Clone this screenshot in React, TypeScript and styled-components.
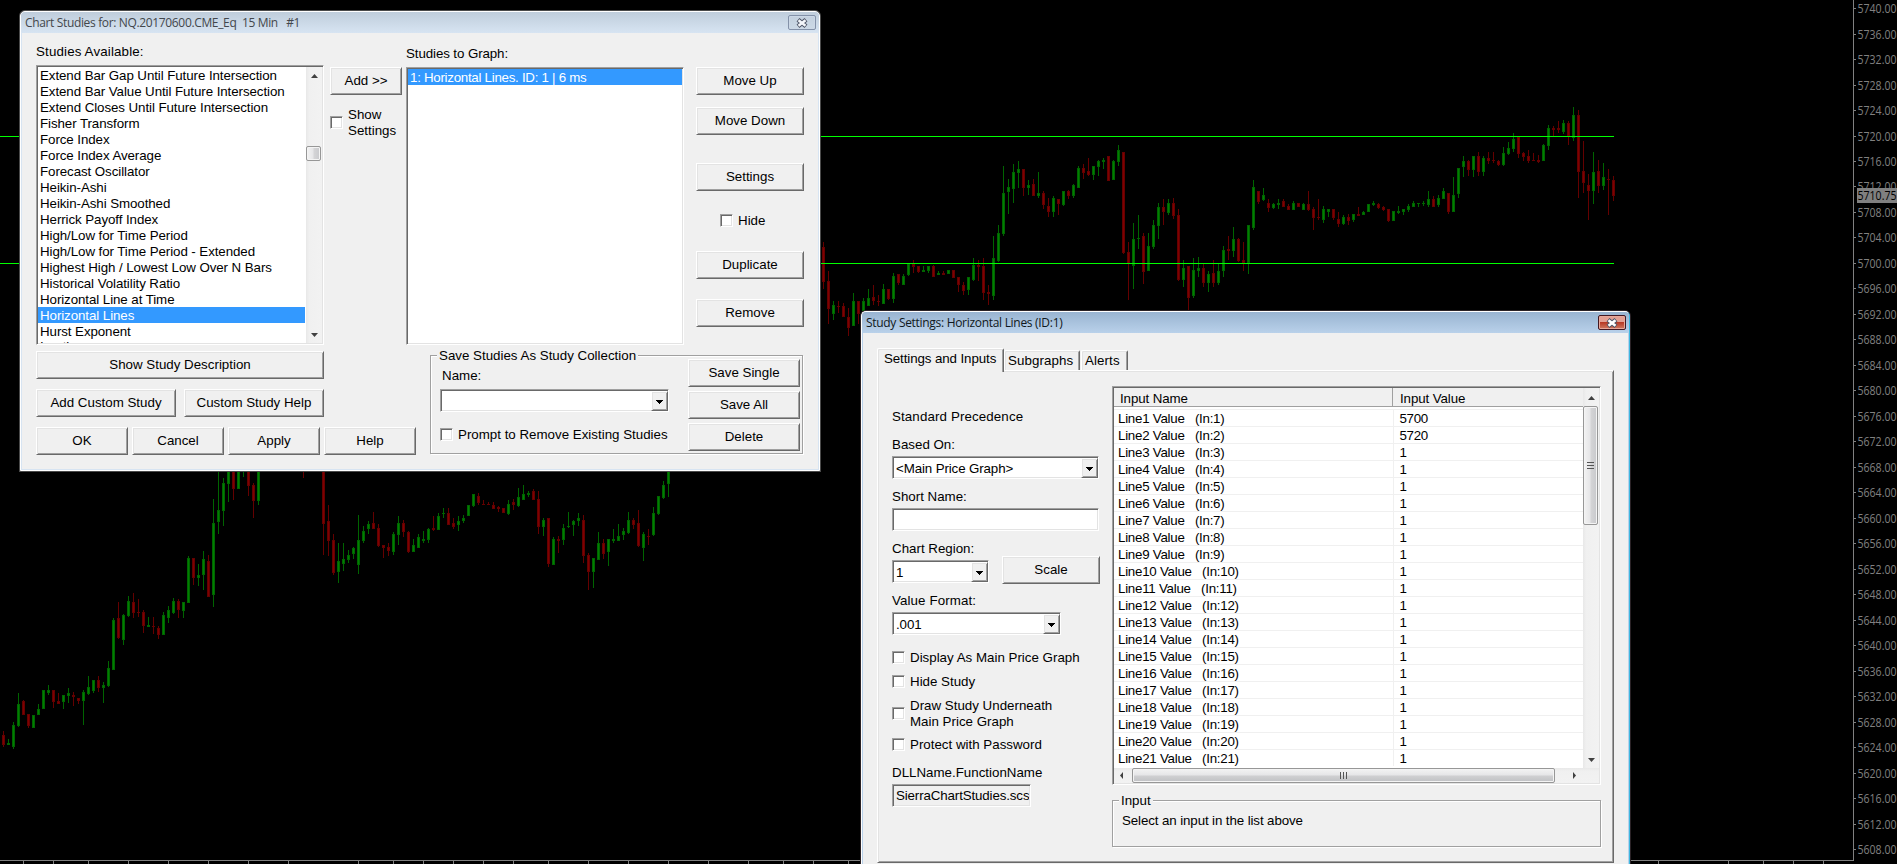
import React from "react";
import styled, { createGlobalStyle, css } from "styled-components";

const GlobalStyle = createGlobalStyle`
  body { margin: 0; background: #000; overflow: hidden; }
  * { box-sizing: border-box; }
`;

const raised = css`
  border: 1px solid;
  border-color: #fff #696969 #696969 #fff;
  box-shadow: inset 1px 1px 0 #e3e3e3, inset -1px -1px 0 #a0a0a0;
`;

const Desktop = styled.main`
  position: relative;
  width: 1897px;
  height: 864px;
  overflow: hidden;
  background: #000;
  color: #000;
  font: 13.33px/16px "Liberation Sans", Arial, sans-serif;
`;

const ChartSvg = styled.svg`
  display: block;
`;

const Window = styled.section<{ $x: number; $y: number; $w: number; $h: number; $active?: boolean }>`
  position: absolute;
  left: ${(p) => p.$x}px;
  top: ${(p) => p.$y}px;
  width: ${(p) => p.$w}px;
  height: ${(p) => p.$h}px;
  display: flex;
  flex-direction: column;
  background: #f0f0f0;
  border: 1px solid #fff;
  border-right-color: ${(p) => (p.$active ? "#3fb8e0" : "#fff")};
  border-radius: 5px 5px 0 0;
  box-shadow: 0 0 0 1px ${(p) => (p.$active ? "#2a2226" : "#4a4a4a")}, inset 0 0 0 1px ${(p) => (p.$active ? "#b9d1ea" : "#d7e4f2")};
`;

const TitleBar = styled.header<{ $active?: boolean }>`
  flex: none;
  height: 21px;
  padding: 3px 3px 0 4px;
  display: flex;
  justify-content: space-between;
  align-items: flex-start;
  border-radius: 4px 4px 0 0;
  background: ${(p) =>
    p.$active ? "linear-gradient(#99b4d1, #b9d1ea)" : "linear-gradient(#bfcddb, #d7e4f2)"};
  color: ${(p) => (p.$active ? "#101820" : "#43474c")};
`;

const Title = styled.span<{ $spacing: number }>`
  font: 12px/16px "Open Sans", "Noto Sans", sans-serif;
  letter-spacing: ${(p) => p.$spacing}px;
  white-space: pre;
`;

const CloseBox = styled.span<{ $active?: boolean }>`
  width: 28px;
  height: 15px;
  display: flex;
  align-items: center;
  justify-content: center;
  border-radius: 2px;
  border: 1px solid ${(p) => (p.$active ? "#431822" : "#8391a8")};
  box-shadow: inset 0 0 0 1px ${(p) => (p.$active ? "#e8a89a" : "#ccd8e6")};
  background: ${(p) =>
    p.$active ? "linear-gradient(#e3a094 0 45%, #b83a26 50%, #d07a62)" : "linear-gradient(#c3d0de, #ccd9e6)"};
`;

const Row = styled.div<{ $mt?: number; $gap?: number }>`
  display: flex;
  align-items: flex-start;
  margin-top: ${(p) => p.$mt ?? 0}px;
  gap: ${(p) => p.$gap ?? 0}px;
`;

const Column = styled.div<{ $w?: number; $ml?: number; $pt?: number }>`
  flex: none;
  display: flex;
  flex-direction: column;
  align-items: flex-start;
  width: ${(p) => (p.$w ? `${p.$w}px` : "auto")};
  margin-left: ${(p) => p.$ml ?? 0}px;
  padding-top: ${(p) => p.$pt ?? 0}px;
`;

const StudiesBody = styled.div`
  padding-left: 15px;
`;

const Label = styled.div<{ $mt?: number; $ml?: number; $ls?: number }>`
  height: 16px;
  margin: ${(p) => p.$mt ?? 0}px 0 0 ${(p) => p.$ml ?? 0}px;
  letter-spacing: ${(p) => p.$ls ?? 0}px;
  white-space: pre;
`;

const PushButton = styled.button<{ $w: number; $mt?: number }>`
  ${raised}
  flex: none;
  width: ${(p) => p.$w}px;
  height: 28px;
  margin: ${(p) => p.$mt ?? 0}px 0 0;
  padding: 0;
  background: #f0f0f0;
  color: #000;
  font: inherit;
  border-radius: 0;
`;

const Sunken = styled.div<{ $w: number; $h: number; $mt?: number; $gray?: boolean }>`
  flex: none;
  display: flex;
  width: ${(p) => p.$w}px;
  height: ${(p) => p.$h}px;
  margin-top: ${(p) => p.$mt ?? 0}px;
  padding: 1px;
  overflow: hidden;
  background: ${(p) => (p.$gray ? "#f0f0f0" : "#fff")};
  border: 1px solid;
  border-color: #a0a0a0 #fff #fff #a0a0a0;
  box-shadow: inset 1px 1px 0 #696969, inset -1px -1px 0 #e3e3e3;
`;

const FieldText = styled.span<{ $pt: number; $ls?: number }>`
  flex: 1;
  min-width: 0;
  padding: ${(p) => p.$pt}px 0 0 2px;
  letter-spacing: ${(p) => p.$ls ?? 0}px;
  overflow: hidden;
  white-space: nowrap;
`;

const DropButton = styled.span`
  ${raised}
  flex: none;
  width: 17px;
  height: 20px;
  margin-right: -1px;
  display: flex;
  align-items: center;
  justify-content: center;
  background: #f0f0f0;
`;

const CheckRow = styled.label<{ $mt?: number; $ml?: number }>`
  display: flex;
  align-items: center;
  gap: 5px;
  margin: ${(p) => p.$mt ?? 0}px 0 0 ${(p) => p.$ml ?? 0}px;
  white-space: pre;
`;

const CheckBox = styled.span`
  width: 13px;
  height: 13px;
  margin-bottom: 1px;
  background: #fff;
  border: 1px solid;
  border-color: #a0a0a0 #fff #fff #a0a0a0;
  box-shadow: inset 1px 1px 0 #696969, inset -1px -1px 0 #e3e3e3;
`;

const Items = styled.div<{ $ls: number }>`
  flex: 1;
  min-width: 0;
  overflow: hidden;
  letter-spacing: ${(p) => p.$ls}px;
`;

const Item = styled.div<{ $selected?: boolean }>`
  height: 16px;
  padding-left: 2px;
  line-height: 18px;
  white-space: pre;
  background: ${(p) => (p.$selected ? "#3399ff" : "transparent")};
  color: ${(p) => (p.$selected ? "#fff" : "#000")};

  &:nth-child(18) {
    line-height: 16px;
  }
`;

const VScroll = styled.div<{ $ml?: number }>`
  flex: none;
  width: 16px;
  margin-left: ${(p) => p.$ml ?? 0}px;
  display: flex;
  flex-direction: column;
  align-items: stretch;
  background: linear-gradient(90deg, #e8e8e8, #f0f0f0 20%, #f2f2f2);
`;

const HScroll = styled.div`
  flex: none;
  height: 15px;
  display: flex;
  background: linear-gradient(#e8e8e8, #f0f0f0 20%, #f2f2f2);
`;

const ArrowCell = styled.span<{ $w: number; $h: number }>`
  flex: none;
  width: ${(p) => p.$w}px;
  height: ${(p) => p.$h}px;
  display: flex;
  align-items: center;
  justify-content: center;
`;

const Thumb = styled.span<{ $w: number; $h: number; $mt?: number; $ml?: number; $flat?: boolean }>`
  flex: none;
  width: ${(p) => p.$w}px;
  height: ${(p) => p.$h}px;
  margin: ${(p) => p.$mt ?? 0}px 0 0 ${(p) => p.$ml ?? 0}px;
  display: flex;
  align-items: center;
  justify-content: center;
  border: 1px solid #979797;
  border-radius: 2px;
  box-shadow: inset 0 0 0 1px #f4f4f4;
  background: ${(p) =>
    p.$flat
      ? "linear-gradient(#f3f3f3, #e6e6e8 45%, #cfcfd1 55%, #c0c1c4)"
      : "linear-gradient(90deg, #f3f3f3, #e6e6e8 45%, #d4d4d6 55%, #c8c9cc)"};
`;

const Spacer = styled.span`
  flex: 1;
`;

const GroupBox = styled.div<{ $w: number; $h: number; $mt?: number; $ml?: number }>`
  position: relative;
  flex: none;
  display: flex;
  align-items: flex-start;
  width: ${(p) => p.$w}px;
  height: ${(p) => p.$h}px;
  margin: ${(p) => p.$mt ?? 0}px 0 0 ${(p) => p.$ml ?? 0}px;
  border: 1px solid #a0a0a0;
  box-shadow: 1px 1px 0 #fff, inset 1px 1px 0 #fff;
`;

const Legend = styled.span`
  position: absolute;
  left: 6px;
  top: -8px;
  padding: 0 2px;
  background: #f0f0f0;
  white-space: nowrap;
`;

const TabStrip = styled.div`
  display: flex;
  align-items: flex-end;
  height: 37px;
  padding-left: 15px;
`;

const Tab = styled.div<{ $w: number; $active?: boolean }>`
  position: relative;
  z-index: ${(p) => (p.$active ? 1 : 0)};
  width: ${(p) => p.$w}px;
  height: ${(p) => (p.$active ? 24 : 20)}px;
  margin: ${(p) => (p.$active ? "0 0 -2px 0" : "0 1px 0 0")};
  padding: ${(p) => (p.$active ? "2px 0 0 6px" : "2px 0 0 3px")};
  letter-spacing: ${(p) => (p.$active ? "-0.1px" : "0.1px")};
  background: #f0f0f0;
  white-space: nowrap;
  border: 1px solid;
  border-color: #fff #696969 transparent #fff;
  border-bottom: 0;
  box-shadow: inset 1px 1px 0 #e3e3e3, inset -1px 0 0 #a0a0a0;
  border-radius: 2px 2px 0 0;
`;

const TabPanel = styled.div`
  ${raised}
  display: flex;
  align-items: flex-start;
  width: 737px;
  height: 493px;
  margin-left: 15px;
  padding: 15px 0 0 14px;
`;

const Grid = styled.div`
  flex: 1;
  min-width: 0;
  display: flex;
  flex-direction: column;
`;

const GridHeader = styled.div`
  flex: none;
  display: flex;
  height: 19px;
  background: #f0f0f0;
  border-bottom: 1px solid #a0a0a0;
`;

const HeadCell = styled.div<{ $w: number; $pad: number; $split?: boolean }>`
  width: ${(p) => p.$w}px;
  padding: 3px 0 0 ${(p) => p.$pad}px;
  letter-spacing: -0.1px;
  border-right: ${(p) => (p.$split ? "1px solid #a0a0a0" : "0")};
`;

const GridRows = styled.div`
  flex: 1;
  min-height: 0;
  overflow: hidden;
  padding-top: 2px;
  letter-spacing: -0.26px;
`;

const GridRow = styled.div`
  display: flex;
  height: 17px;
  border-top: 1px solid #f0f0f0;
  white-space: pre;
`;

const Cell = styled.div<{ $w: number; $pad: number; $line?: boolean }>`
  width: ${(p) => p.$w}px;
  padding-left: ${(p) => p.$pad}px;
  line-height: 17px;
  border-right: ${(p) => (p.$line ? "1px solid #f0f0f0" : "0")};
`;

/* Candle rows: direction, high, body top, body bottom, low; in thirds of a pixel below the run's base line. */
type Run = { first: number; base: number; rows: string };

const runs: Run[] = [
  {
    first: 0,
    base: 465,
    rows: `r 798 810 840 846;g 822 834 840 840;g 771 780 846 852;g 684 717 783 786;r 705 708 750 750;r 747 747 783 789;g 750 750 789 789;g 717 732 750 750;g 675 675 732 732;g 660 675 684 690;r 675 675 711 729;r 684 708 717 717;g 690 690 711 732;g 669 684 693 714;r 681 690 696 723;r 699 699 708 717;g 675 681 708 780;g 633 666 687 690;g 645 645 678 684;r 633 645 669 681;g 651 660 669 714;g 588 609 663 666;g 459 465 615 615;r 411 459 519 522;g 447 450 525 540;g 393 408 453 456;r 384 411 444 459;r 402 441 444 456;r 435 441 483 504;g 456 480 486 486;r 456 483 486 507;r 483 489 510 522;g 441 450 510 510;g 423 435 459 474;g 399 408 444 447;r 402 408 435 459;g 411 411 438 459;g 273 279 414 414;r 279 279 339 360;g 297 330 339 363;g 258 282 330 375;r 270 288 396 396;g 102 174 390 426;g 0 135 171 207;g 39 54 138 183;g 0 0 57 111;r 0 0 72 105;g 0 0 72 72;g 0 0 15 36;r 0 0 63 93;r 54 60 108 159;g 0 0 108 120`,
  },
  { first: 60, base: 465, rows: `r 0 0 9 39` },
  {
    first: 64,
    base: 465,
    rows: `r 0 0 177 270;r 120 168 228 273;r 207 225 324 330;g 234 288 321 354;g 234 282 297 318;g 255 270 285 294;g 246 249 267 282;g 150 225 300 327;g 183 198 228 234;g 168 177 192 207;r 141 174 192 192;r 177 189 243 246;r 240 240 249 279;r 234 246 258 273;g 201 207 261 270;g 153 174 210 240;r 165 174 201 216;r 198 201 261 264;g 222 240 261 261;g 207 216 249 249;g 198 222 228 234;g 189 192 225 234;r 153 189 195 198;g 144 153 195 195;g 129 144 147 159;r 129 144 180 180;r 159 174 186 192;g 153 168 180 198;g 150 159 168 174;g 120 120 153 153;g 87 87 123 126;r 84 93 114 120;r 105 117 120 120;r 111 117 120 120;r 111 120 132 132;r 123 126 132 141;r 129 129 144 144;g 105 117 147 150;r 102 111 120 135;g 69 96 123 126;g 60 87 105 105;g 78 84 90 96;r 72 78 105 105;r 78 102 186 207;g 159 165 186 213;r 159 159 297 306;g 216 222 300 300;r 213 222 228 264;g 177 189 225 240;g 141 183 186 189;g 165 168 180 213;g 144 159 168 183;r 150 165 273 294;r 264 270 321 375;g 279 279 321 369;g 201 234 285 285;r 222 234 267 282;g 222 222 261 303;g 192 222 228 234;g 177 213 228 228;g 189 198 210 225;g 141 165 204 207;r 159 165 180 192;r 135 174 243 246;g 201 207 249 288;r 192 213 216 240;g 126 144 210 213;g 93 93 147 150;g 48 60 99 102;g 0 0 57 96`,
  },
  {
    first: 164,
    base: 90,
    rows: `r 456 471 576 597;r 543 573 657 702;g 633 645 672 690;r 633 648 651 669;r 639 648 681 681;r 654 681 714 738;g 609 633 708 708;r 633 633 672 702;g 624 633 663 663;g 597 624 648 648;r 585 621 633 645;r 615 633 636 648;g 582 597 642 642;r 597 597 627 630;g 549 558 627 639;r 552 552 579 585;g 552 558 585 585;g 522 522 555 558;r 510 522 531 549;r 528 528 546 549;g 528 540 546 546;g 528 528 543 549;r 525 528 561 561;g 543 549 555 555;r 543 549 555 555;g 540 540 552 552;r 540 540 564 564;r 561 561 585 606;r 576 585 603 615;g 561 561 600 615;g 504 525 570 573;r 510 525 531 573;r 504 528 609 630;r 585 606 612 645;g 438 504 618 630;g 405 429 513 516;g 228 309 432 438;g 267 291 306 372;g 222 246 297 339;g 213 237 249 294;r 237 237 294 318;g 270 285 294 315;r 267 282 318 318;g 246 309 318 324;r 303 309 345 357;r 324 348 366 381;g 318 324 366 381;r 327 327 342 375;g 303 303 345 348;r 300 303 318 327;g 282 285 318 324;g 228 234 294 294;r 222 234 249 267;r 204 243 255 258;g 228 228 255 270;g 210 213 231 258;g 204 210 216 237;r 198 198 273 273;g 210 213 270 270;g 165 180 216 228;r 186 186 489 492;r 456 486 522 630;g 399 447 528 597;g 375 444 447 477;r 429 438 546 582;g 429 468 543 543;g 390 405 471 477;g 339 351 408 447;r 327 351 366 405;g 327 339 369 375;r 324 339 378 387;r 357 375 570 573;g 510 534 570 591;r 528 528 624 660;g 504 540 618 624;g 501 534 543 561;r 522 534 579 591;g 543 552 579 606;r 510 549 579 591;g 522 543 579 585;g 468 480 543 561;r 438 477 483 510`,
  },
  {
    first: 246,
    base: 90,
    rows: `g 411 447 483 501;r 444 447 513 516;r 456 510 519 543;g 405 405 519 552;g 270 291 414 420;r 303 303 336 342;g 294 315 330 333;r 327 339 354 366;g 339 342 354 357;g 327 339 345 357;r 327 333 351 351;r 342 348 360 360;g 333 339 360 360;r 339 339 351 351;g 339 342 360 360;r 303 342 360 363;r 351 357 384 420;r 327 381 384 390;g 348 357 390 399;g 357 357 366 381;r 357 357 384 390;r 366 387 402 411;g 375 381 402 405;r 372 381 393 405;g 372 372 390 396;r 351 372 378 378;g 363 366 375 375;g 342 342 366 366;g 333 339 345 348;r 339 342 354 357;r 348 351 360 363;r 357 357 393 396;g 363 363 393 393;g 348 363 369 372;g 357 357 366 375;g 342 348 360 366;g 333 339 351 351;g 339 339 342 351;g 333 339 342 348;g 303 327 345 351;r 318 327 351 351;g 315 324 345 351;g 294 303 327 327;r 309 309 366 372;g 261 315 366 366;g 234 234 312 324;g 198 213 231 261;r 210 213 240 258;g 198 198 240 261;r 186 198 246 258;g 198 204 246 258;r 186 204 213 222;r 186 210 213 219;r 210 213 225 228;g 171 189 225 228;g 156 174 192 195;g 129 147 177 186;r 141 141 192 204;r 186 189 201 213;r 180 198 213 219;r 189 210 213 213;r 195 210 216 219;g 162 165 213 213;g 105 114 168 180;r 108 114 120 138;r 93 114 120 129;g 90 99 126 132;r 93 99 138 165;g 51 75 144 153;r 60 75 246 324;r 153 243 279 309;r 252 285 303 390;g 186 246 303 342;r 210 243 288 309;g 219 261 288 300;r 237 267 270 375;r 258 270 318 333`,
  },
];

const candles = runs.flatMap((run) =>
  run.rows.split(";").map((row, i) => {
    const [dir, ...v] = row.split(" ");
    const [high, top, bottom, low] = v.map((n) => run.base + Math.round(Number(n) / 3));
    return { x: 3 + (run.first + i) * 5, up: dir === "g", high, top, bottom, low };
  })
);

const timeTicks = [
  23, 53, 88, 128, 168, 208, 248, 288, 358, 393, 423, 453, 483, 513, 548, 588, 628, 668, 708, 748, 783, 813, 848,
  1658, 1728, 1763, 1793, 1823,
];
const prices = Array.from({ length: 34 }, (_, i) => 5740 - i * 4);
const priceY = (price: number) => Math.floor(136 + (5720 - price) * 6.372);

const AxisText = styled.text`
  font: 12px "Open Sans", "Noto Sans", sans-serif;
`;

const Chart = () => (
  <ChartSvg width="1897" height="864" shapeRendering="crispEdges">
    {candles.map((c) => (
      <g key={c.x} fill={c.up ? "#006400" : "#640000"}>
        <rect x={c.x} y={c.high} width="1" height={Math.max(1, c.low - c.high)} />
        <rect x={c.x - 1} y={c.top} width="3" height={Math.max(1, c.bottom - c.top)} />
        {c.bottom - c.top > 2 && (
          <rect x={c.x} y={c.top + 1} width="1" height={c.bottom - c.top - 2} fill={c.up ? "#008000" : "#800000"} />
        )}
      </g>
    ))}
    <rect x="0" y="136" width="1614" height="1" fill="#00ff00" />
    <rect x="0" y="263" width="1614" height="1" fill="#00ff00" />
    <g fill="#808080">
      <rect x="1853" y="0" width="1" height="861" />
      <rect x="0" y="860" width="1854" height="1" />
      {timeTicks.map((x) => (
        <rect key={x} x={x} y="861" width="1" height="3" />
      ))}
      {prices.map((p) => (
        <React.Fragment key={p}>
          <rect x="1854" y={priceY(p)} width="2" height="1" />
          <AxisText x="1857.5" y={priceY(p) + 5} textLength="39" lengthAdjust="spacingAndGlyphs">
            {p.toFixed(2)}
          </AxisText>
        </React.Fragment>
      ))}
      <rect x="1857" y="188" width="40" height="15" />
      <AxisText x="1857.5" y="200" fill="#000" textLength="39" lengthAdjust="spacingAndGlyphs">
        5710.75
      </AxisText>
    </g>
  </ChartSvg>
);

const CloseGlyph = ({ active }: { active?: boolean }) => (
  <svg width="14" height="10" viewBox="0 0 14 10">
    <path d="M3 1.8 L11 8.2 M11 1.8 L3 8.2" stroke="#4e5567" strokeWidth="4.6" />
    <path d="M3.5 2.2 L10.5 7.8 M10.5 2.2 L3.5 7.8" stroke={active ? "#fff" : "#f4f6fa"} strokeWidth="2.6" />
  </svg>
);

const Triangle = ({ dir }: { dir: "up" | "down" | "left" | "right" | "drop" }) => {
  const d = {
    up: "M0 6 L3.5 2 L7 6 Z",
    down: "M0 2 L7 2 L3.5 6 Z",
    left: "M5 0 L2 3.5 L5 7 Z",
    right: "M3 0 L6 3.5 L3 7 Z",
    drop: "M0 2 H7 V3 H6 V4 H5 V5 H4 V6 H3 V5 H2 V4 H1 V3 H0 Z",
  }[dir];
  return (
    <svg width={dir === "left" || dir === "right" ? 8 : 7} height="7">
      <path d={d} fill={dir === "drop" ? "#000" : "#404040"} />
    </svg>
  );
};

const Grip = ({ vertical }: { vertical?: boolean }) => (
  <svg width="8" height="8" shapeRendering="crispEdges">
    {[0, 3, 6].map((n) =>
      vertical ? (
        <rect key={n} x={n} y="0" width="1" height="7" fill="#555" />
      ) : (
        <rect key={n} x="0" y={n} width="7" height="1" fill="#555" />
      )
    )}
  </svg>
);

const Combo = ({ width, value, mt }: { width: number; value?: string; mt?: number }) => (
  <Sunken $w={width} $h={23} $mt={mt}>
    <FieldText $pt={3} $ls={-0.12}>{value}</FieldText>
    <DropButton>
      <Triangle dir="drop" />
    </DropButton>
  </Sunken>
);

const Check = ({ text, mt, ml }: { text: string; mt?: number; ml?: number }) => (
  <CheckRow $mt={mt} $ml={ml}>
    <CheckBox />
    <span>{text}</span>
  </CheckRow>
);

const studies = [
  "Extend Bar Gap Until Future Intersection",
  "Extend Bar Value Until Future Intersection",
  "Extend Closes Until Future Intersection",
  "Fisher Transform",
  "Force Index",
  "Force Index Average",
  "Forecast Oscillator",
  "Heikin-Ashi",
  "Heikin-Ashi Smoothed",
  "Herrick Payoff Index",
  "High/Low for Time Period",
  "High/Low for Time Period - Extended",
  "Highest High / Lowest Low Over N Bars",
  "Historical Volatility Ratio",
  "Horizontal Line at Time",
  "Horizontal Lines",
  "Hurst Exponent",
  "Inertia",
];

const ChartStudies = () => (
  <Window $x={20} $y={11} $w={800} $h={460}>
    <TitleBar>
      <Title $spacing={-0.35}>{"Chart Studies for: NQ.20170600.CME_Eq  15 Min   #1"}</Title>
      <CloseBox>
        <CloseGlyph />
      </CloseBox>
    </TitleBar>
    <StudiesBody>
      <Row>
        <Column $w={288} $pt={11}>
          <Label $ls={0.15}>Studies Available:</Label>
          <Sunken $w={288} $h={280} $mt={5}>
            <Items $ls={-0.08}>
              {studies.map((s) => (
                <Item key={s} $selected={s === "Horizontal Lines"}>
                  {s}
                </Item>
              ))}
            </Items>
            <VScroll $ml={1}>
              <ArrowCell $w={16} $h={17}>
                <Triangle dir="up" />
              </ArrowCell>
              <Thumb $w={15} $h={15} $mt={62} />
              <Spacer />
              <ArrowCell $w={16} $h={17}>
                <Triangle dir="down" />
              </ArrowCell>
            </VScroll>
          </Sunken>
        </Column>
        <Column $w={72} $ml={6} $pt={34}>
          <PushButton $w={72}>Add &gt;&gt;</PushButton>
          <Check text={"Show\nSettings"} mt={12} />
        </Column>
        <Column $w={278} $ml={4} $pt={13}>
          <Label $ls={-0.1}>Studies to Graph:</Label>
          <Sunken $w={278} $h={278} $mt={5}>
            <Items $ls={-0.28}>
              <Item $selected>1: Horizontal Lines. ID: 1 | 6 ms</Item>
            </Items>
          </Sunken>
        </Column>
        <Column $w={108} $ml={12} $pt={34}>
          <PushButton $w={108}>Move Up</PushButton>
          <PushButton $w={108} $mt={12}>Move Down</PushButton>
          <PushButton $w={108} $mt={28}>Settings</PushButton>
          <Check text="Hide" mt={22} ml={24} />
          <PushButton $w={108} $mt={22}>Duplicate</PushButton>
          <PushButton $w={108} $mt={20}>Remove</PushButton>
        </Column>
      </Row>
      <Row>
        <Column $w={380} $pt={6}>
          <PushButton $w={288}>Show Study Description</PushButton>
          <Row $mt={10} $gap={8}>
            <PushButton $w={140}>Add Custom Study</PushButton>
            <PushButton $w={140}>Custom Study Help</PushButton>
          </Row>
          <Row $mt={10} $gap={4}>
            <PushButton $w={92}>OK</PushButton>
            <PushButton $w={92}>Cancel</PushButton>
            <PushButton $w={92}>Apply</PushButton>
            <PushButton $w={92}>Help</PushButton>
          </Row>
        </Column>
        <GroupBox $w={373} $h={99} $mt={10} $ml={14}>
          <Legend>Save Studies As Study Collection</Legend>
          <Column $w={229} $ml={9} $pt={12}>
            <Label $ml={2}>Name:</Label>
            <Combo width={229} mt={5} />
            <Check text="Prompt to Remove Existing Studies" mt={15} />
          </Column>
          <Column $ml={19} $pt={3}>
            <PushButton $w={112}>Save Single</PushButton>
            <PushButton $w={112} $mt={4}>Save All</PushButton>
            <PushButton $w={112} $mt={4}>Delete</PushButton>
          </Column>
        </GroupBox>
      </Row>
    </StudiesBody>
  </Window>
);

const inputs = Array.from({ length: 21 }, (_, i) => ({
  name: `Line${i + 1} Value   (In:${i + 1})`,
  value: i === 0 ? "5700" : i === 1 ? "5720" : "1",
}));

const StudySettings = () => (
  <Window $x={861} $y={311} $w={769} $h={600} $active>
    <TitleBar $active>
      <Title $spacing={-0.3}>Study Settings: Horizontal Lines (ID:1)</Title>
      <CloseBox $active>
        <CloseGlyph active />
      </CloseBox>
    </TitleBar>
    <TabStrip>
      <Tab $w={127} $active>Settings and Inputs</Tab>
      <Tab $w={76}>Subgraphs</Tab>
      <Tab $w={47}>Alerts</Tab>
    </TabStrip>
    <TabPanel>
      <Column $w={220} $pt={23}>
        <Label $ls={0.12}>Standard Precedence</Label>
        <Label $mt={12}>Based On:</Label>
        <Combo width={207} value="<Main Price Graph>" mt={3} />
        <Label $mt={10}>Short Name:</Label>
        <Sunken $w={207} $h={23} $mt={3} />
        <Label $mt={10}>Chart Region:</Label>
        <Row $gap={13} $mt={-1}>
          <Combo width={97} value="1" mt={4} />
          <PushButton $w={98}>Scale</PushButton>
        </Row>
        <Label $mt={9} $ls={0.1}>Value Format:</Label>
        <Combo width={169} value=".001" mt={3} />
        <Check text="Display As Main Price Graph" mt={15} />
        <Check text="Hide Study" mt={8} />
        <Check text={"Draw Study Underneath\nMain Price Graph"} mt={8} />
        <Check text="Protect with Password" mt={7} />
        <Label $mt={12}>DLLName.FunctionName</Label>
        <Sunken $w={139} $h={23} $mt={3} $gray>
          <FieldText $pt={2} $ls={-0.13}>SierraChartStudies.scs</FieldText>
        </Sunken>
      </Column>
      <Column>
        <Sunken $w={489} $h={399}>
          <Grid>
            <Row>
              <Grid>
                <GridHeader>
                  <HeadCell $w={279} $pad={6} $split>Input Name</HeadCell>
                  <HeadCell $w={190} $pad={7}>Input Value</HeadCell>
                </GridHeader>
                <GridRows>
                  {inputs.map((r) => (
                    <GridRow key={r.name}>
                      <Cell $w={281} $pad={4} $line>{r.name}</Cell>
                      <Cell $w={189} $pad={5}>{r.value}</Cell>
                    </GridRow>
                  ))}
                </GridRows>
              </Grid>
              <VScroll>
                <ArrowCell $w={16} $h={18}>
                  <Triangle dir="up" />
                </ArrowCell>
                <Thumb $w={15} $h={119}>
                  <Grip />
                </Thumb>
                <ArrowCell $w={16} $h={225} />
                <ArrowCell $w={16} $h={18}>
                  <Triangle dir="down" />
                </ArrowCell>
              </VScroll>
            </Row>
            <HScroll>
              <ArrowCell $w={16} $h={15}>
                <Triangle dir="left" />
              </ArrowCell>
              <Thumb $w={423} $h={15} $ml={2} $flat>
                <Grip vertical />
              </Thumb>
              <ArrowCell $w={38} $h={15}>
                <Triangle dir="right" />
              </ArrowCell>
              <Spacer />
            </HScroll>
          </Grid>
        </Sunken>
        <GroupBox $w={489} $h={47} $mt={15}>
          <Legend>Input</Legend>
          <Label $mt={12} $ml={9} $ls={-0.11}>Select an input in the list above</Label>
        </GroupBox>
      </Column>
    </TabPanel>
  </Window>
);

export default function App() {
  return (
    <Desktop>
      <GlobalStyle />
      <Chart />
      <ChartStudies />
      <StudySettings />
    </Desktop>
  );
}
